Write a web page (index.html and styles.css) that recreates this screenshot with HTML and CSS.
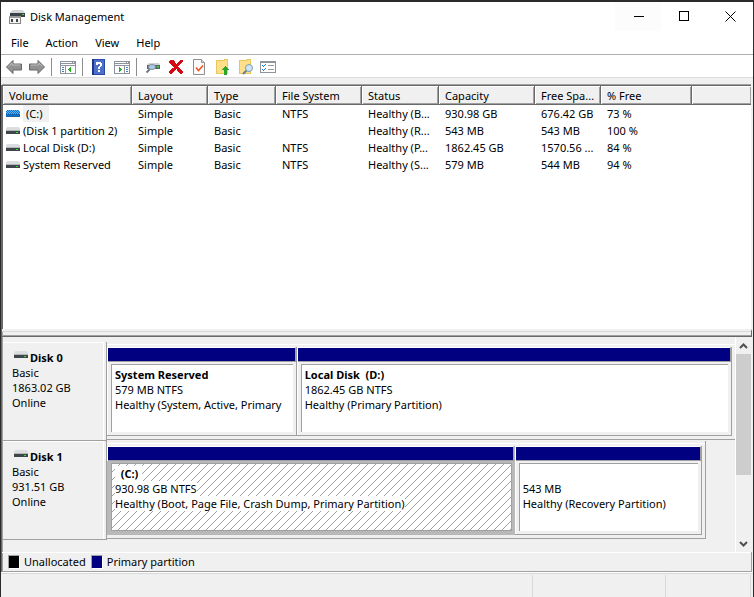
FILE: index.html
```html
<!DOCTYPE html>
<html lang="en">
<head>
<meta charset="utf-8">
<title>Disk Management</title>
<link rel="stylesheet" href="styles.css">
</head>
<body>
<svg class="defs" aria-hidden="true">
  <symbol id="drive" viewBox="0 0 14 9">
    <path d="M1 1h12v1h1v2H0V2h1z" fill="#dcddde"/>
    <path d="M0 4h14v1H0z" fill="#b4b7b9"/>
    <path d="M0 5h14v3H0z" fill="#3f454a"/>
    <path d="M10 6h2v1h-2z" fill="#2be52b"/>
  </symbol>
  <pattern id="checker" width="2" height="2" patternUnits="userSpaceOnUse">
    <path d="M0 0h1v1H0zM1 1h1v1H1z" fill="#0078d7"/>
  </pattern>
  <pattern id="hatch" width="8" height="8" patternUnits="userSpaceOnUse">
    <path d="M7 0h1v1H7zM6 1h1v1H6zM5 2h1v1H5zM4 3h1v1H4zM3 4h1v1H3zM2 5h1v1H2zM1 6h1v1H1zM0 7h1v1H0z" fill="#a0a0a0"/>
  </pattern>
</svg>
<div class="window">
  <header class="titlebar">
    <svg class="app-icon" viewBox="0 0 16 16" aria-hidden="true">
      <path d="M3 1h11l2 3H1z" fill="#d4d6d7"/>
      <path d="M1 4h15v4H1z" fill="#3c4247"/>
      <path d="M13 5h2v1h-2z" fill="#2be52b"/>
      <path d="M0 7h12v8H0z" fill="#858585"/>
      <path d="M1 8h10v6H1z" fill="#f4f4f4"/>
      <path d="M0 7h12v2H0z" fill="#9a9a9a"/>
      <path d="M2 10h2v3H2zM7 10h2v3H7z" fill="#444"/>
    </svg>
    <h1>Disk Management</h1>
    <div class="controls">
      <button class="hot" aria-label="Minimize"><svg viewBox="0 0 11 11"><path d="M1 5h10v1H1z"/></svg></button>
      <button aria-label="Maximize"><svg viewBox="0 0 11 11"><path d="M.5.5h9v9h-9z" fill="none" stroke="#000"/></svg></button>
      <button aria-label="Close"><svg class="smooth" viewBox="0 0 11 11"><path d="M.5.5l10 10M10.5.5l-10 10" stroke="#000"/></svg></button>
    </div>
  </header>
  <nav class="menu">
    <button>File</button><button>Action</button><button>View</button><button>Help</button>
  </nav>
  <div class="toolbar">
    <button aria-label="Back"><svg class="smooth" viewBox="0 0 16 16"><path d="M.5 8L7 1.500v3.500h8.500v6H7v3.500z" fill="#929292" stroke="#666"/><path d="M2.500 7.500L6 4v2h8" fill="none" stroke="#bcbcbc"/></svg></button>
    <button aria-label="Forward"><svg class="smooth" viewBox="0 0 16 16"><path d="M15.500 8L9 1.500v3.500H.5v6H9v3.500z" fill="#929292" stroke="#666"/><path d="M13.500 7.500L10 4v2H2" fill="none" stroke="#bcbcbc"/></svg></button>
    <span class="sep"></span>
    <button aria-label="Show or hide console tree"><svg viewBox="0 0 16 16"><path d="M0 2h16v13H0z" fill="#8c959e"/><path d="M1 3h11v1H1zM13 3h1v1h-1zM1 5h14v1H1zM1 7h4v7H1zM6 7h9v7H6z" fill="#fff"/><path d="M2 8h2v1H2zM2 10h2v1H2zM2 12h2v1H2z" fill="#4b7eb7"/><path d="M11 8v5h-1v-1H9v-1H8v-1h1V9h1V8z" fill="#27b027"/></svg></button>
    <span class="sep"></span>
    <button aria-label="Help"><svg viewBox="0 0 16 16"><path d="M1 0h13v16H1z" fill="#2a49a3"/><path d="M3 1h10v14H3z" fill="#4e70cb"/><path d="M1 0h2v16H1z" fill="#1d3888"/><path d="M5 3h5v1h1v3h-1v1H9v2H7V8h1V7h1V5H7v1H5zM7 11h2v2H7z" fill="#fff"/></svg></button>
    <button aria-label="Show or hide action pane"><svg viewBox="0 0 16 16"><path d="M0 2h16v13H0z" fill="#8c959e"/><path d="M1 3h11v1H1zM13 3h1v1h-1zM1 5h14v1H1zM1 7h9v7H1zM11 7h4v7h-4z" fill="#fff"/><path d="M12 8h2v1h-2zM12 10h2v1h-2zM12 12h2v1h-2z" fill="#4b7eb7"/><path d="M5 8v5h1v-1h1v-1h1v-1H7V9H6V8z" fill="#27b027"/></svg></button>
    <span class="sep"></span>
    <button aria-label="Rescan disks"><svg class="smooth" viewBox="0 0 16 16"><path d="M4 4h10l1 2H2z" fill="#d0d2d4"/><path d="M2 6h13v4H2z" fill="#5b6268"/><path d="M12 7h2v1.500h-2z" fill="#2be52b"/><path d="M5 10l-3.500 3.500" stroke="#6d7b88" stroke-width="2"/><ellipse cx="7" cy="8" rx="3.500" ry="2.500" fill="#a9cde8" stroke="#85919b"/></svg></button>
    <button aria-label="Delete"><svg viewBox="0 0 16 16"><path d="M2 1h4v1h1v2h1v1h1V4h1V3h1V2h1V1h3v2h-1v1h-1v1h-1v1h-1v1h-1v1h1v1h1v1h1v1h1v1h1v2h-1v1h-2v-1h-1v-1h-1v-1h-1v-1H9v-1H8v1H7v1H6v1H5v1H4v1H2v-1H1v-2h1v-1h1v-1h1v-1h1V9h1V8H5V7H4V6H3V5H2V4H1V2h1z" fill="#d40b14"/></svg></button>
    <button aria-label="Properties"><svg class="smooth" viewBox="0 0 16 16"><path d="M2.500.5h8l3 3v12h-11z" fill="#fafafa" stroke="#8e8e8e"/><path d="M10.500.5v3h3" fill="#ddd" stroke="#8e8e8e"/><path d="M5 8.500l2.500 3L12 6.500" fill="none" stroke="#f0541e" stroke-width="1.500"/></svg></button>
    <button aria-label="Open"><svg viewBox="0 0 16 16"><path d="M2 1h7l1-1h4v15H2z" fill="#e9c65d"/><path d="M3 2h7l1-1h2v13H3z" fill="#ffe08a"/><path d="M11 7l4 4h-2v5h-3v-5H7z" fill="#2ba62b"/></svg></button>
    <button aria-label="Explore"><svg class="smooth" viewBox="0 0 16 16"><path d="M2 1h7l1-1h4v15H2z" fill="#e9c65d"/><path d="M3 2h7l1-1h2v13H3z" fill="#ffe08a"/><path d="M9.500 11.500L6 15" stroke="#63829b" stroke-width="2"/><circle cx="12" cy="9" r="3.500" fill="#cbe7f8" stroke="#7f9aae"/></svg></button>
    <button aria-label="Settings"><svg viewBox="0 0 16 16"><path d="M0 2h16v12H0z" fill="#8c959e"/><path d="M1 4h14v9H1z" fill="#fff"/><path d="M8 6h6v1H8zM8 10h6v1H8z" fill="#999"/><path d="M2 6h1v1h1v1H3V7H2zM4 6h1v1H4zM5 5h1v1H5zM2 10h1v1H2zM3 11h1v1H3zM4 10h1v1H4zM5 9h1v1H5z" fill="#1f78d0"/></svg></button>
  </div>

  <main class="content">
    <section class="volumes" aria-label="Volumes">
      <table>
        <colgroup><col class="c-vol"><col class="c-lay"><col class="c-type"><col class="c-fs"><col class="c-stat"><col class="c-cap"><col class="c-free"><col class="c-pct"><col></colgroup>
        <thead><tr><th>Volume</th><th>Layout</th><th>Type</th><th>File System</th><th>Status</th><th>Capacity</th><th>Free Spa...</th><th>% Free</th><th></th></tr></thead>
        <tbody>
          <tr><td><div class="vol"><svg class="drive" viewBox="0 0 14 9"><path d="M1 1h12v1h1v6H0V2h1z" fill="#6db1e8"/><path d="M0 5h14v3H0z" fill="#1d5f9c"/><path d="M1 1h12v1h1v6H0V2h1z" fill="url(#checker)"/></svg><span class="selected">(C:)</span></div></td><td>Simple</td><td>Basic</td><td>NTFS</td><td>Healthy (B...</td><td>930.98 GB</td><td>676.42 GB</td><td>73 %</td><td></td></tr>
          <tr><td><div class="vol"><svg class="drive"><use href="#drive"/></svg><span>(Disk 1 partition 2)</span></div></td><td>Simple</td><td>Basic</td><td></td><td>Healthy (R...</td><td>543 MB</td><td>543 MB</td><td>100 %</td><td></td></tr>
          <tr><td><div class="vol"><svg class="drive"><use href="#drive"/></svg><span>Local Disk (D:)</span></div></td><td>Simple</td><td>Basic</td><td>NTFS</td><td>Healthy (P...</td><td>1862.45 GB</td><td>1570.56 ...</td><td>84 %</td><td></td></tr>
          <tr><td><div class="vol"><svg class="drive"><use href="#drive"/></svg><span>System Reserved</span></div></td><td>Simple</td><td>Basic</td><td>NTFS</td><td>Healthy (S...</td><td>579 MB</td><td>544 MB</td><td>94 %</td><td></td></tr>
        </tbody>
      </table>
    </section>
    <div class="splitter"></div>

    <section class="disks" aria-label="Disks">
      <div class="disk-list">
        <article class="disk">
          <div class="disk-info">
            <h2><svg class="drive"><use href="#drive"/></svg>Disk 0</h2>
            <p>Basic</p><p>1863.02 GB</p><p>Online</p>
          </div>
          <div class="graph full">
            <div class="part reserved"><div class="bar"></div><div class="frame"><div class="body"><p><b>System Reserved</b></p><p>579 MB NTFS</p><p>Healthy (System, Active, Primary</p></div></div></div>
            <div class="part local"><div class="bar"></div><div class="frame"><div class="body"><p><b>Local Disk&nbsp; (D:)</b></p><p>1862.45 GB NTFS</p><p>Healthy (Primary Partition)</p></div></div></div>
          </div>
        </article>
        <article class="disk">
          <div class="disk-info">
            <h2><svg class="drive"><use href="#drive"/></svg>Disk 1</h2>
            <p>Basic</p><p>931.51 GB</p><p>Online</p>
          </div>
          <div class="graph short">
            <div class="part boot active"><div class="bar"></div><div class="frame"><div class="body"><svg class="hatch" aria-hidden="true"><rect width="100%" height="100%" fill="url(#hatch)"/></svg><p><b>&nbsp; (C:)</b></p><p><span>930.98 GB NTFS</span></p><p><span>Healthy (Boot, Page File, Crash Dump, Primary Partition)</span></p></div></div></div>
            <div class="part recovery"><div class="bar"></div><div class="frame"><div class="body"><p><b>&nbsp;</b></p><p>543 MB</p><p>Healthy (Recovery Partition)</p></div></div></div>
          </div>
        </article>
      </div>
      <div class="scrollbar">
        <button aria-label="Scroll up"><svg class="smooth" viewBox="0 0 9 6"><path d="M1 5l3.500-3.500L8 5" fill="none" stroke="#505050" stroke-width="2"/></svg></button>
        <div class="track"><div class="thumb"></div></div>
        <button aria-label="Scroll down"><svg class="smooth" viewBox="0 0 9 6"><path d="M1 1l3.500 3.500L8 1" fill="none" stroke="#505050" stroke-width="2"/></svg></button>
      </div>
    </section>
    <div class="legend">
      <span class="swatch black"></span><span class="label">Unallocated</span>
      <span class="swatch navy"></span><span class="label">Primary partition</span>
    </div>
  </main>
  <footer class="status"><span></span><span></span><span></span></footer>
</div>
</body>
</html>
```
FILE: styles.css
```css
* { box-sizing: border-box; }

body {
  margin: 0;
  font: 11px/15px "Noto Sans", "Open Sans", sans-serif;
  color: #000;
  background: #f0f0f0;
}

h1, h2, p { margin: 0; font-size: inherit; font-weight: normal; }

button {
  display: flex;
  align-items: center;
  justify-content: center;
  padding: 0;
  border: 0;
  background: none;
  font: inherit;
  color: inherit;
}

svg { display: block; shape-rendering: crispEdges; }
svg.smooth { shape-rendering: auto; }
.defs { position: absolute; width: 0; height: 0; }

.window {
  display: flex;
  flex-direction: column;
  min-height: 100vh;
  border: solid #2b2b2b;
  border-width: 2px 1px 0;
}

.titlebar {
  display: flex;
  align-items: center;
  height: 29px;
  padding-left: 8px;
  background: #fff;
}
.titlebar h1 { margin-left: 5px; flex: 1; }
.app-icon { width: 16px; height: 16px; }
.controls { display: flex; height: 100%; }
.controls button { width: 46px; }
.controls .hot { background: #fcfcfc; }
.controls svg { width: 11px; height: 11px; }

.menu {
  display: flex;
  height: 24px;
  gap: 17px;
  padding-left: 10px;
  background: #fff;
  border-bottom: 1px solid #b0b0b0;
}

.toolbar {
  display: flex;
  height: 23px;
  padding-left: 2px;
  background: #fff;
  border-bottom: 1px solid #dcdcdc;
}
.toolbar button { width: 23px; padding-right: 1px; padding-top: 2px; }
.toolbar svg { width: 16px; height: 16px; }
.sep { width: 8px; padding: 3px 0 1px 2px; }
.sep::before { content: ""; display: block; width: 1px; height: 100%; background: #8d8d8d; }

.content {
  display: flex;
  flex-direction: column;
  flex: 1;
  margin-top: 7px;
  border-left: 1px solid #696969;
  box-shadow: inset 1px 0 #a0a0a0;
}

.volumes {
  flex: 1;
  margin-right: 2px;
  border: solid #696969;
  border-width: 1px 0 0 1px;
  box-shadow: 0 -1px #a0a0a0;
  background: #fff;
}
.volumes table { width: 100%; table-layout: fixed; border-collapse: separate; border-spacing: 0; }
.c-vol { width: 129px; }
.c-lay { width: 76px; }
.c-type { width: 68px; }
.c-fs { width: 86px; }
.c-stat { width: 77px; }
.c-cap { width: 96px; }
.c-free { width: 66px; }
.c-pct { width: 91px; }
th, td { padding: 0 0 0 6px; text-align: left; font-weight: normal; white-space: nowrap; }
th {
  height: 19px;
  padding-top: 1px;
  background: #f0f0f0;
  border-right: 1px solid #696969;
  border-bottom: 1px solid #696969;
  box-shadow: inset 1px 1px #fff, inset -1px -1px #a0a0a0;
}
th:last-child { border-right: 0; }
td { height: 17px; }
tbody td:first-child { padding-left: 3px; }
.vol { display: flex; align-items: center; gap: 3px; height: 17px; }
.drive { width: 14px; height: 9px; flex: none; }
.selected { background: #f0f0f0; line-height: 17px; padding: 0 6px 0 3px; }

.splitter {
  height: 8px;
  margin-right: 1px;
  border-top: 2px solid #f0f0f0;
  border-bottom: 1px solid #696969;
  border-right: 1px solid #696969;
  box-shadow: inset 0 1px #d9d9d9, inset 0 -1px #a0a0a0;
}

.disks { display: flex; height: 215px; margin-right: 2px; }
.disk-list { flex: 1; min-width: 0; padding-top: 5px; padding-left: 1px; border-right: 1px solid #fff; }
.disk { display: flex; height: 99px; }
.disk-info {
  flex: none;
  width: 104px;
  height: 99px;
  padding: 8px 0 0 9px;
  border-right: 1px solid #a0a0a0;
  border-bottom: 1px solid #a0a0a0;
  box-shadow: inset -2px 0 #f0f0f0, inset -3px 0 #fff, inset 0 1px #fff;
}
.disk-info h2 { display: flex; gap: 2px; padding-left: 2px; font-weight: bold; }

.graph {
  display: flex;
  flex: 1;
  min-width: 0;
  padding: 5px 3px 3px 0;
  border: solid #a0a0a0;
  border-width: 0 1px 1px 0;
  box-shadow: inset 0 2px #f0f0f0, inset 0 3px #fff;
  height: 98px;
}
.graph.full { border-right: 0; }
.graph.short { margin-right: 29px; }
.part {
  display: flex;
  flex-direction: column;
  min-width: 0;
  border: solid #a0a0a0;
  border-width: 0 1px 1px 0;
  box-shadow: inset 1px 1px #fff;
}
.reserved { flex: 189 1 0; }
.local { flex: 435 1 0; }
.boot { flex: 408 1 0; }
.recovery { flex: 187 1 0; }
.bar {
  height: 15px;
  margin-left: 1px;
  background: #000080;
  border: solid #a0a0a0;
  border-width: 0 1px 1px 0;
  border-top: 1px solid #fff;
}
.frame { flex: 1; padding: 2px 3px 3px 4px; }
.body {
  position: relative;
  height: 100%;
  overflow: hidden;
  padding: 2px 0 0 3px;
  background: #fff;
  border: solid #a0a0a0;
  border-width: 1px 0 0 1px;
  white-space: nowrap;
}
.part p { position: relative; }
.active { border-color: #b9b9b9; }
.active .frame { background: #b9b9b9; padding-right: 2px; }
.active .body { border-width: 1px; }
.active p > * { background: #fff; display: inline-block; }
.active b { padding-right: 4px; }
.hatch { position: absolute; top: 0; left: 0; width: 100%; height: 100%; }

.scrollbar { display: flex; flex-direction: column; width: 15px; }
.scrollbar button { height: 17px; flex: none; }
.scrollbar svg { width: 9px; height: 6px; }
.track { flex: 1; }
.thumb { height: 67%; background: #cdcdcd; }

.legend {
  display: flex;
  align-items: center;
  height: 20px;
  margin-right: 1px;
  padding-left: 6px;
  border: solid #a0a0a0;
  border-width: 0 1px 1px 0;
  box-shadow: inset 0 1px #fff;
}
.swatch { width: 12px; height: 14px; border: 1px solid #fff; border-top-color: #a0a0a0; border-left-color: #a0a0a0; }
.black { background: #000; }
.navy { background: #000080; }
.label { margin: 0 5px 0 4px; }

.status {
  display: flex;
  height: 25px;
  padding-top: 2px;
  border-top: 1px solid #fff;
  box-shadow: inset 0 1px #d9d9d9;
}
.status span { border-right: 1px solid #d9d9d9; }
.status span:nth-child(1) { flex: 533; }
.status span:nth-child(2) { flex: 133; }
.status span:nth-child(3) { flex: 84; margin-right: 2px; }
```
